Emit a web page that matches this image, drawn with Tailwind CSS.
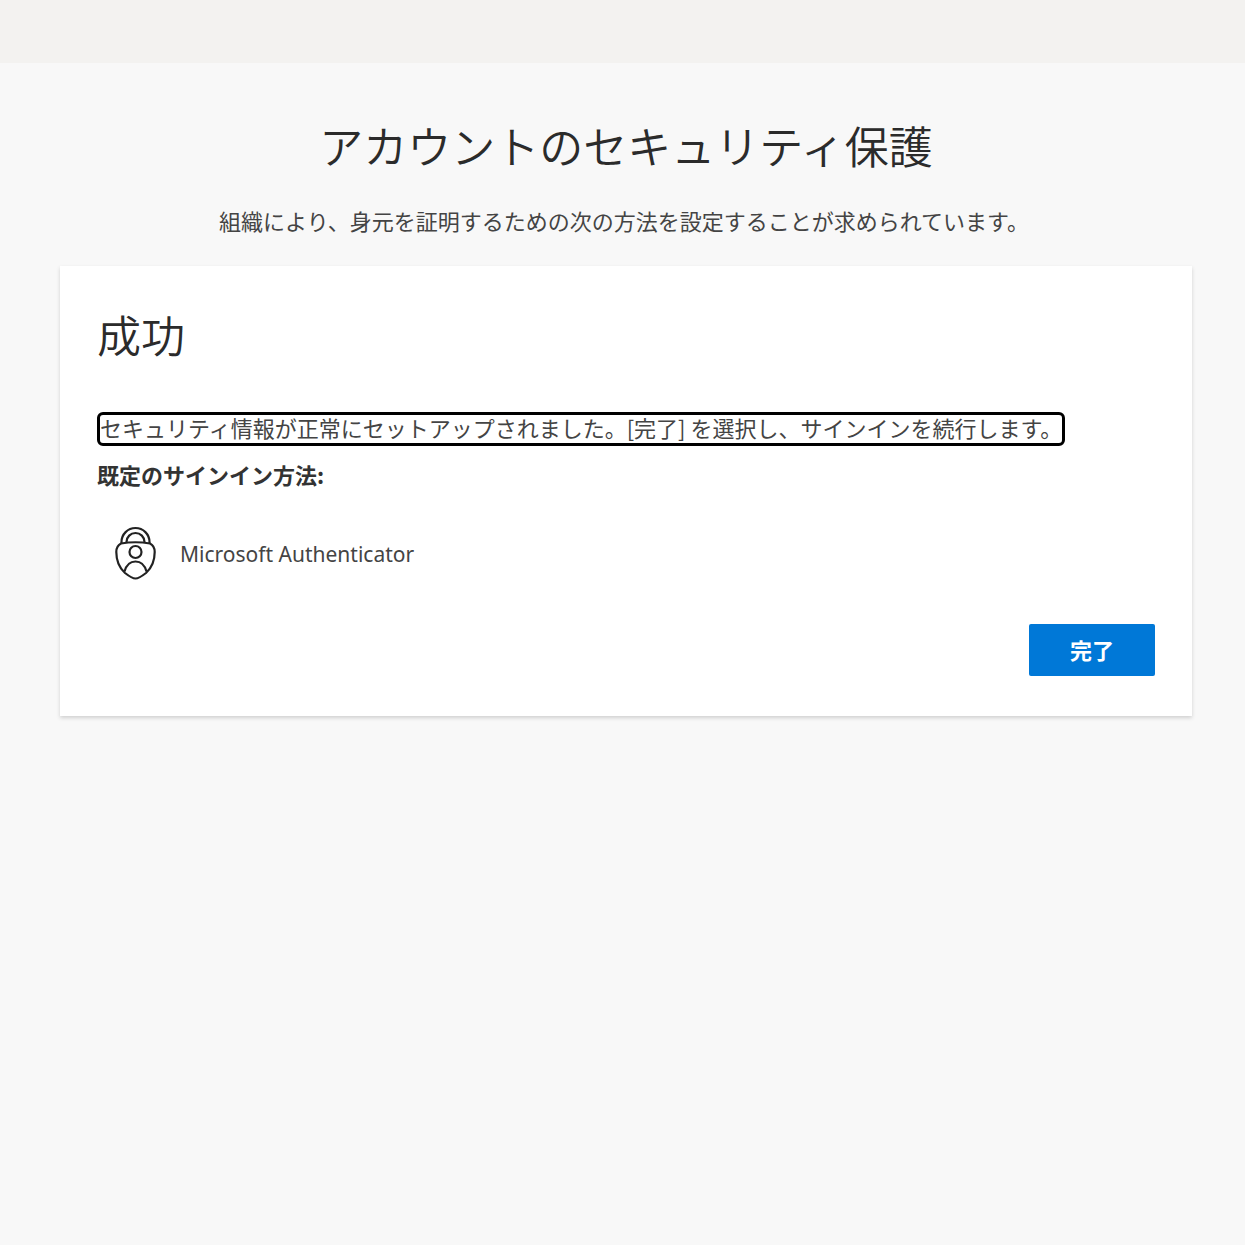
<!DOCTYPE html>
<html lang="ja">
<head>
<meta charset="utf-8">
<meta name="viewport" content="width=device-width, initial-scale=1">
<title>アカウントのセキュリティ保護</title>
<script src="https://cdn.jsdelivr.net/npm/@tailwindcss/browser@4"></script>
</head>
<body class="min-h-screen bg-[#f8f8f8] font-['Noto_Sans_CJK_JP',sans-serif] text-[22px] leading-8 text-[#444]">
<header class="h-[63px] bg-[#f3f2f0]"></header>
<main class="pt-[50px] pr-[53px] pl-[60px]">
  <h1 class="text-center text-[44px] leading-16 font-[350] text-[#2b2b2b]">アカウントのセキュリティ保護</h1>
  <p class="mt-[27px] pr-1 text-center">組織により、身元を証明するための次の方法を設定することが求められています。</p>
  <section class="mt-[30px] bg-white px-[37px] pt-9 pb-10 shadow-[0_2px_4px_rgba(0,0,0,0.16)]">
    <h2 class="text-[44px] leading-16 font-[350] text-[#2b2b2b]">成功</h2>
    <p class="mt-[46px] w-fit rounded-md border-3 border-black pb-1 leading-6" tabindex="-1">セキュリティ情報が正常にセットアップされました。[完了] を選択し、サインインを続行します。</p>
    <h3 class="mt-3 font-bold text-[#333]">既定のサインイン方法:</h3>
    <div class="mt-9 flex items-center gap-6 pl-[18px]">
      <svg class="h-[54px] w-[41px]" viewBox="0 0 41 54" fill="none" stroke="#222" stroke-width="2.2" stroke-linejoin="round" aria-hidden="true">
        <path d="M6.500 17v-1a14 14 0 0 1 28 0v1"/>
        <path d="M11.500 16a9 9 0 0 1 18 0"/>
        <path d="M6 17.500Q20.500 15 35 17.500Q39.700 20 39.700 26C39.700 35 36 42.500 31 47Q24 52.500 20.500 52.500Q17 52.500 10 47C5 42.500 1.300 35 1.300 26Q1.300 20 6 17.500Z"/>
        <circle cx="20.500" cy="26" r="6"/>
        <path d="M9.500 45.500C11.500 38.500 15.500 35.500 20.500 35.500S29.500 38.500 31.500 45.500"/>
      </svg>
      <span class="pt-[2px] font-['Noto_Sans',sans-serif] text-[21px]">Microsoft Authenticator</span>
    </div>
    <div class="mt-11 flex justify-end">
      <button type="button" class="h-[52px] w-[126px] rounded-xs bg-[#0078d7] pb-[2px] font-bold text-white">完了</button>
    </div>
  </section>
</main>
</body>
</html>
